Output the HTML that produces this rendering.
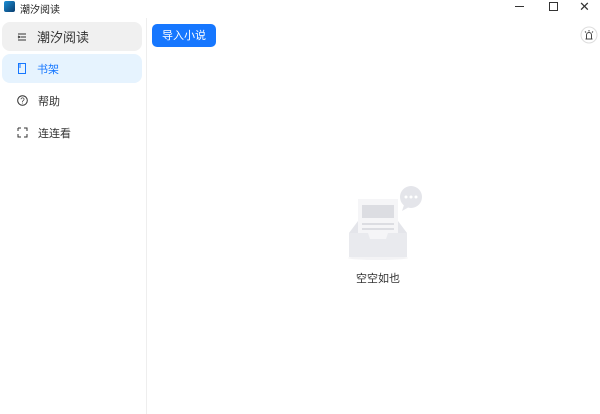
<!DOCTYPE html>
<html><head><meta charset="utf-8"><style>
*{margin:0;padding:0;box-sizing:border-box}
body{width:600px;height:414px;background:#fff;font-family:"Liberation Sans","Noto Sans CJK SC",sans-serif;position:relative;overflow:hidden;color:#333}
.abs{position:absolute}
.item{position:absolute;left:2px;width:140px;height:29px;border-radius:8px;font-size:11px;display:flex;align-items:center;padding-left:15px}
.item span{margin-left:10px}
</style></head><body>
<div class="abs" style="left:4px;top:1px;width:11px;height:11px;border-radius:2px;background:linear-gradient(135deg,#1b8fd6,#0a3d6e)"></div>
<div class="abs" style="left:20px;top:1px;font-size:10px;color:#222">潮汐阅读</div>
<div class="abs" style="left:515px;top:6px;width:9px;height:1px;background:#333"></div>
<div class="abs" style="left:549px;top:2px;width:9px;height:9px;border:1px solid #333"></div>
<div class="abs" style="left:579px;top:-1px;font-size:13px;color:#333">✕</div>
<div class="abs" style="left:146px;top:18px;width:1px;height:396px;background:#eee"></div>
<div class="item" style="top:22px;background:#f0f0f0;font-size:13px;color:#333"><svg width="10" height="10"><path d="M1 2H9M4 5H9M1 8H9M1 4L3 5L1 6" stroke="#333" fill="none"/></svg><span>潮汐阅读</span></div>
<div class="item" style="top:54px;background:#e6f3fe;color:#1677ff"><svg width="10" height="11"><rect x="1.5" y="0.5" width="7" height="10" fill="none" stroke="#1677ff"/><path d="M3 1V5" stroke="#1677ff"/></svg><span>书架</span></div>
<div class="item" style="top:86px"><svg width="11" height="11"><circle cx="5.5" cy="5.5" r="4.8" fill="none" stroke="#333"/><text x="5.5" y="8.5" font-size="8" text-anchor="middle" fill="#333">?</text></svg><span>帮助</span></div>
<div class="item" style="top:118px"><svg width="11" height="11"><path d="M1 1H4M7 1H10V4M10 7V10H7M4 10H1V7M1 4V1" stroke="#333" fill="none"/></svg><span>连连看</span></div>
<div class="abs" style="left:152px;top:24px;width:64px;height:23px;border-radius:5px;background:#1677ff;color:#fff;font-size:11px;text-align:center;line-height:24px">导入小说</div>
<svg class="abs" style="left:580px;top:26px" width="18" height="18"><circle cx="9" cy="9" r="8" fill="#fff" stroke="#ddd"/><path d="M5.5 13H12.5M6.5 12.5V9A2.5 2.5 0 0 1 11.5 9V12.5M9 4V5.5M5 5.5L6 6.5M13 5.5L12 6.5" stroke="#444" fill="none"/></svg>
<svg class="abs" style="left:340px;top:185px" width="90" height="80">
<ellipse cx="38" cy="73" rx="30" ry="2" fill="#f3f3f5"/>
<path d="M9 48L18 36H58L67 48V72H9Z" fill="#e4e5ea"/>
<rect x="18" y="14" width="40" height="40" fill="#f5f5f7"/>
<rect x="22" y="20" width="32" height="13" fill="#dcdde2"/>
<rect x="22" y="38" width="32" height="2" fill="#dcdde2"/>
<rect x="22" y="43" width="32" height="2" fill="#dcdde2"/>
<path d="M9 48H28L30 54H46L48 48H67V72H9Z" fill="#e9eaee"/>
<circle cx="71" cy="12" r="11" fill="#e4e5ea"/><path d="M64 20L62 26L69 22Z" fill="#e4e5ea"/>
<circle cx="66" cy="12" r="1.5" fill="#fff"/><circle cx="71" cy="12" r="1.5" fill="#fff"/><circle cx="76" cy="12" r="1.5" fill="#fff"/>
</svg>
<div class="abs" style="left:356px;top:270px;font-size:11px;color:#333">空空如也</div>
</body></html>
